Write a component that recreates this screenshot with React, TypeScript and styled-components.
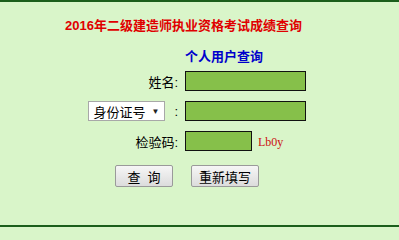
import styled, { createGlobalStyle } from 'styled-components'

// page

const GlobalStyle = createGlobalStyle`
  html, body {
    margin: 0;
    padding: 0;
    background: #d9f5c9;
  }
  body {
    font-family: "Liberation Sans", "Noto Sans CJK SC", sans-serif;
  }
`

const Panel = styled.div`
  box-sizing: border-box;
  width: 399px;
  height: 227px;
  background: #d9f5c9;
  border-top: 2px solid #1b5e1b;
  border-bottom: 2px solid #1b5e1b;
  overflow: hidden;
`

const Title = styled.h1`
  margin: 16px 0 0 65px;
  font-size: 13px;
  line-height: 16px;
  font-weight: bold;
  color: #e00000;
`

const Form = styled.div`
  display: grid;
  grid-template-columns: 98px auto;
  grid-template-rows: 9px;
  grid-auto-rows: 20px;
  column-gap: 7px;
  row-gap: 10px;
  margin: 18px 0 0 80px;
  align-items: center;
`

const SubTitle = styled.div`
  grid-column: 2;
  height: 9px;
  font-size: 13px;
  line-height: 9px;
  font-weight: bold;
  color: #0000cc;
`

const Label = styled.label`
  display: flex;
  justify-content: flex-end;
  align-items: center;
  gap: 9px;
  font-size: 13px;
  color: #000;
  white-space: nowrap;
`

const Field = styled.div`
  display: flex;
  align-items: center;
  gap: 6px;
`

const Input = styled.input<{ $w?: number }>`
  box-sizing: border-box;
  width: ${p => p.$w || 121}px;
  height: 20px;
  margin: 0;
  padding: 0 3px;
  background: #86c04a;
  border: 1.5px solid #111;
  outline: none;
`

const Select = styled.div`
  box-sizing: border-box;
  display: flex;
  align-items: center;
  justify-content: space-between;
  width: 77px;
  height: 20px;
  padding: 0 5px 0 4px;
  background: #fff;
  border: 1px solid #a8a8a8;
  font-size: 13px;
  color: #000;
`

const Arrow = styled.span`
  font-size: 8px;
  color: #222;
`

const Code = styled.span`
  font-family: "Liberation Serif", serif;
  font-size: 12px;
  color: #cc1111;
  padding-top: 2px;
`

const Buttons = styled.div`
  display: flex;
  gap: 18px;
  margin: 14px 0 0 115px;
`

const Button = styled.button<{ $w: number }>`
  box-sizing: border-box;
  width: ${p => p.$w}px;
  height: 22px;
  padding: 0;
  font-family: "Liberation Sans", "Noto Sans CJK SC", sans-serif;
  font-size: 13px;
  color: #000;
  background: linear-gradient(#f6f6f6, #dcdcdc);
  border: 1px solid #9a9a9a;
  border-radius: 2px;
`

const App = () => {
  return (
    <Panel>
      <GlobalStyle />
      <Title>2016年二级建造师执业资格考试成绩查询</Title>
      <Form>
        <SubTitle>个人用户查询</SubTitle>

        <Label>姓名:</Label>
        <Field><Input /></Field>

        <Label>
          <Select>身份证号<Arrow>▼</Arrow></Select>:
        </Label>
        <Field><Input /></Field>

        <Label>检验码:</Label>
        <Field>
          <Input $w={67} />
          <Code>Lb0y</Code>
        </Field>
      </Form>
      <Buttons>
        <Button $w={58}>查&nbsp;&nbsp;询</Button>
        <Button $w={68}>重新填写</Button>
      </Buttons>
    </Panel>
  )
}

export default App
